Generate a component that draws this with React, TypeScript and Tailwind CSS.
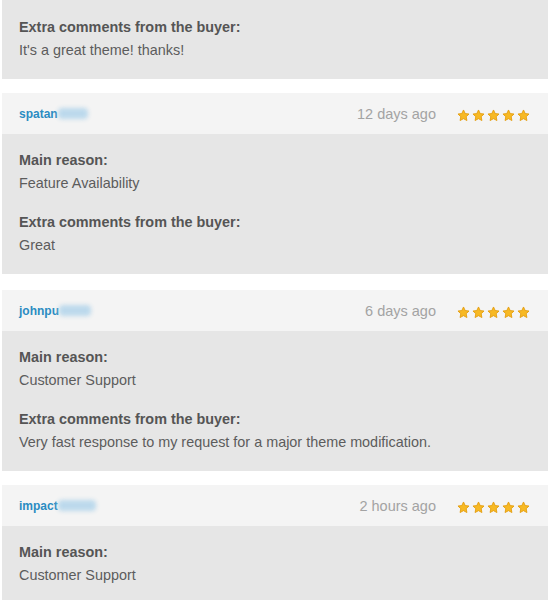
import React from "react";

const Star = () => (
  <svg width="13" height="13" viewBox="0 0 24 24">
    <path
      d="M12 1.8l3.1 6.6 7.1.9-5.2 4.9 1.3 7.1L12 17.8l-6.3 3.5 1.3-7.1L1.8 9.3l7.1-.9z"
      fill="#f7b924"
      stroke="#e39b0b"
      strokeWidth="1.6"
      strokeLinejoin="round"
    />
  </svg>
);

const Stars = () => (
  <div className="flex items-center gap-[2px]">
    <Star />
    <Star />
    <Star />
    <Star />
    <Star />
  </div>
);

type Section = { title: string; text: string };

const Body = ({ sections, first, last }: { sections: Section[]; first?: boolean; last?: boolean }) => (
  <div
    className={`bg-[#e6e6e6] px-[17px] ${first ? "pt-[16px]" : "pt-[15px]"} ${last ? "pb-[40px]" : "pb-[17px]"} flex flex-col gap-[16px]`}
  >
    {sections.map((s, i) => (
      <div key={i} className="text-[14.4px] leading-[23px]">
        <div className="font-bold text-[#555555]">{s.title}</div>
        <div className="text-[#5c5c5c]">{s.text}</div>
      </div>
    ))}
  </div>
);

const Header = ({ name, blurW, date }: { name: string; blurW: number; date: string }) => (
  <div className="bg-[#f4f4f4] h-[41px] flex items-center justify-between pl-[17px] pr-[18px]">
    <div className="flex items-center">
      <span className="text-[12px] font-bold text-[#2b8cc2]">{name}</span>
      <span
        className="h-[11px] bg-[#bcd9ec] rounded-[4px] blur-[2px]"
        style={{ width: blurW }}
      />
    </div>
    <div className="flex items-center gap-[21px] pt-[3px]">
      <span className="text-[14.5px] text-[#a3a3a3]">{date}</span>
      <Stars />
    </div>
  </div>
);

export default function App() {
  return (
    <div
      className="w-[550px] h-[600px] overflow-hidden bg-white px-[2px]"
      style={{ fontFamily: '"Liberation Sans", Arial, sans-serif' }}
    >
      <div>
        <Body first sections={[{ title: "Extra comments from the buyer:", text: "It's a great theme! thanks!" }]} />
      </div>
      <div className="mt-[14px]">
        <Header name="spatan" blurW={30} date="12 days ago" />
        <Body
          sections={[
            { title: "Main reason:", text: "Feature Availability" },
            { title: "Extra comments from the buyer:", text: "Great" },
          ]}
        />
      </div>
      <div className="mt-[16px]">
        <Header name="johnpu" blurW={32} date="6 days ago" />
        <Body
          sections={[
            { title: "Main reason:", text: "Customer Support" },
            {
              title: "Extra comments from the buyer:",
              text: "Very fast response to my request for a major theme modification.",
            },
          ]}
        />
      </div>
      <div className="mt-[14px]">
        <Header name="impact" blurW={38} date="2 hours ago" />
        <Body last sections={[{ title: "Main reason:", text: "Customer Support" }]} />
      </div>
    </div>
  );
}
